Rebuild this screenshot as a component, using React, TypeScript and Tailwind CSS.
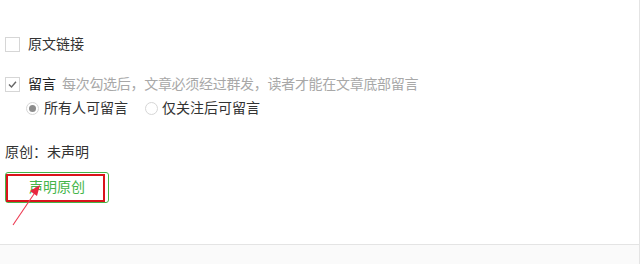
import React from 'react';

const font = { fontFamily: '"Liberation Sans", "Noto Sans CJK SC", sans-serif' };

const Checkbox: React.FC<{ checked?: boolean }> = ({ checked }) => (
  <span className="flex h-[15px] w-[15px] shrink-0 items-center justify-center border border-[#d6d6d6] bg-white">
    {checked && (
      <svg width="11" height="11" viewBox="0 0 11 11">
        <path d="M2 5.5 L4.5 8 L9 2.8" fill="none" stroke="#666" strokeWidth="1.4" />
      </svg>
    )}
  </span>
);

const Radio: React.FC<{ checked?: boolean }> = ({ checked }) => (
  <span className="flex h-[13px] w-[13px] shrink-0 items-center justify-center rounded-full border border-[#d6d6d6] bg-white">
    {checked && <span className="h-[7px] w-[7px] rounded-full bg-[#8d8d8d]" />}
  </span>
);

export default function App() {
  return (
    <div className="flex h-[264px] w-[640px] flex-col bg-white text-[14px] text-[#333]" style={font}>
      <div className="relative flex h-[245px] flex-col border-r border-b border-[#e4e4e4] px-[5px] pt-[34px]">
        <label className="flex h-5 items-center gap-[8px]">
          <Checkbox />
          <span>原文链接</span>
        </label>

        <label className="mt-[20px] flex h-5 items-center gap-[8px]">
          <Checkbox checked />
          <span className="text-[#222]">留言</span>
          <span className="ml-[-2px] tracking-[-0.3px] text-[#a8a8a8]">每次勾选后，文章必须经过群发，读者才能在文章底部留言</span>
        </label>

        <div className="mt-[4px] flex h-5 items-center pl-[21px]">
          <label className="flex items-center gap-[5px]">
            <Radio checked />
            <span>所有人可留言</span>
          </label>
          <label className="ml-[17px] flex items-center gap-[4px]">
            <Radio />
            <span>仅关注后可留言</span>
          </label>
        </div>

        <div className="mt-[24px] flex h-5 items-center">原创：未声明</div>

        <div className="relative mt-[10px] w-[104px]">
          <button className="flex h-[31px] w-[104px] items-center justify-center rounded-[3px] border border-[#44b549] bg-white text-[#44b549]">
            声明原创
          </button>
          <span className="pointer-events-none absolute left-[1px] top-[2px] h-[28px] w-[99px] border-2 border-[#d9141b]" />
        </div>

        <svg className="pointer-events-none absolute left-0 top-0" width="60" height="240" viewBox="0 0 60 240">
          <line x1="13" y1="225" x2="36" y2="191" stroke="#ec3a52" strokeWidth="1.1" />
          <polygon points="40,185 30,191 37,196" fill="#e8263f" />
        </svg>
      </div>
      <div className="flex-1 border-r border-[#e4e4e4] bg-[#fafafa]" />
    </div>
  );
}
